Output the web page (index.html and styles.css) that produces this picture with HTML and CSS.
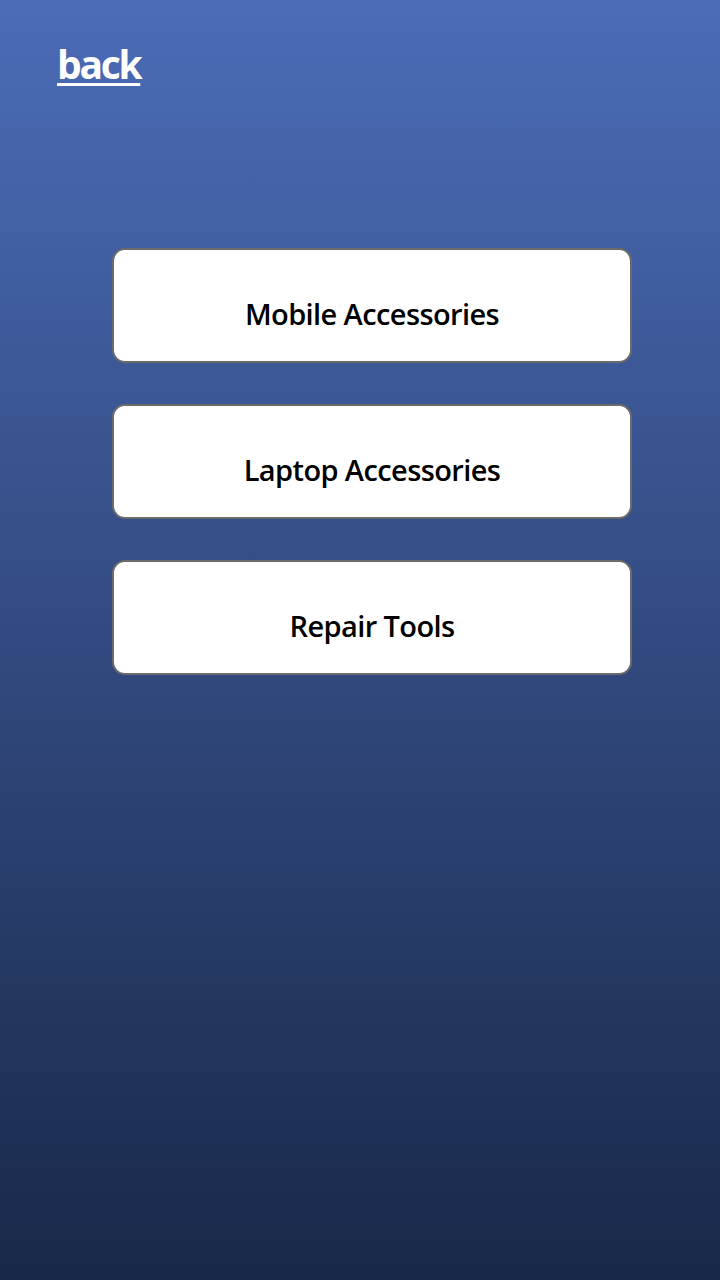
FILE: index.html
```html
<!DOCTYPE html>
<html lang="en">
<head>
<meta charset="utf-8">
<title>Categories</title>
<link rel="stylesheet" href="styles.css">
</head>
<body>
<div class="page">
  <header class="top">
    <a class="back" href="#">back</a>
  </header>
  <main class="menu">
    <button class="card">Mobile Accessories</button>
    <button class="card">Laptop Accessories</button>
    <button class="card">Repair Tools</button>
  </main>
</div>
</body>
</html>
```
FILE: styles.css
```css
html, body {
  margin: 0;
  padding: 0;
}
body {
  font-family: "Open Sans", "Noto Sans", sans-serif;
}
.page {
  min-height: 1280px;
  box-sizing: border-box;
  background: linear-gradient(to bottom, #4b6cb7 0%, #182848 100%);
  padding: 36px 0 0 0;
}
.top {
  padding-left: 57px;
  height: 212px;
}
.back {
  color: #ffffff;
  font-size: 39px;
  font-weight: 700;
  letter-spacing: -2.3px;
  line-height: 56px;
  text-decoration: underline;
  text-decoration-thickness: 3px;
  text-underline-offset: 4px;
}
.menu {
  display: flex;
  flex-direction: column;
  gap: 41px;
  margin-left: 112px;
  width: 520px;
}
.card {
  box-sizing: border-box;
  height: 115px;
  background: #ffffff;
  border: 2px solid #6b6b6b;
  border-radius: 13px;
  font-family: "Open Sans", "Noto Sans", sans-serif;
  font-size: 29px;
  font-weight: 600;
  letter-spacing: -0.6px;
  color: #000000;
  padding: 16px 0 0 0;
  text-align: center;
}
```
